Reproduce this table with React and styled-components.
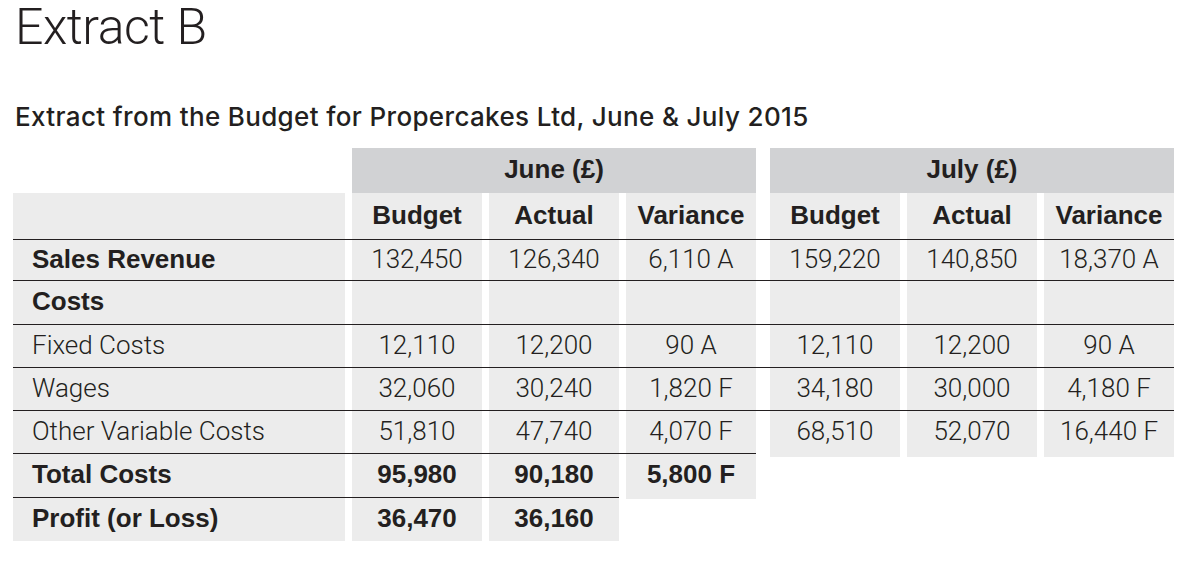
import React from "react";
import styled, { createGlobalStyle } from "styled-components";

const Global = createGlobalStyle`
  html, body { margin: 0; padding: 0; background: #ffffff; }
  body { color: #231f20; font-family: "Liberation Sans", Arial, sans-serif; }
`;

const INK = "#231f20";
const CELL = "#ececec";
const HEAD = "#d1d2d4";

const Page = styled.div`
  padding: 0 0 0 13px;
  display: flex;
  flex-direction: column;
  align-items: flex-start;
`;

const Title = styled.h1`
  margin: 0 0 0 2px;
  font-family: Roboto, "Liberation Sans", sans-serif;
  font-weight: 300;
  font-size: 50px;
  line-height: 54px;
  letter-spacing: -0.5px;
  color: ${INK};
`;

const Subtitle = styled.h2`
  margin: 50px 0 18px 2px;
  font-family: Inter, "Liberation Sans", sans-serif;
  font-weight: 500;
  font-size: 26px;
  line-height: 26px;
  letter-spacing: 0.35px;
  color: ${INK};
`;

const Table = styled.div`
  display: flex;
  flex-direction: column;
  align-items: flex-start;
`;

const Row = styled.div`
  display: flex;
  gap: 7px;
  box-sizing: border-box;
  height: ${(p) => p.$h}px;
  border-top: ${(p) => (p.$ruled ? `1px solid ${INK}` : "none")};
`;

const Spacer = styled.div`
  width: 332px;
`;

const GroupHead = styled.div`
  width: 404px;
  margin-left: ${(p) => (p.$split ? 7 : 0)}px;
  background: ${HEAD};
  display: flex;
  align-items: center;
  justify-content: center;
  padding-bottom: 3px;
  box-sizing: border-box;
  font-family: "Liberation Sans", Arial, sans-serif;
  font-weight: 700;
  font-size: 26px;
  color: ${INK};
`;

const Label = styled.div`
  width: 332px;
  box-sizing: border-box;
  padding: 0 0 2px 19px;
  background: ${CELL};
  display: flex;
  align-items: center;
  white-space: nowrap;
  font-family: ${(p) =>
    p.$bold ? `"Liberation Sans", Arial, sans-serif` : `Roboto, "Liberation Sans", sans-serif`};
  font-weight: ${(p) => (p.$bold ? 700 : 300)};
  font-size: 26px;
  color: ${INK};
`;

const Cell = styled.div`
  width: 130px;
  margin-left: ${(p) => (p.$split ? 7 : 0)}px;
  box-sizing: border-box;
  padding-bottom: 2px;
  background: ${CELL};
  box-shadow: ${(p) => (p.$overhang ? `0 ${p.$overhang}px 0 ${CELL}` : "none")};
  display: flex;
  align-items: center;
  justify-content: center;
  white-space: nowrap;
  font-family: ${(p) =>
    p.$bold ? `"Liberation Sans", Arial, sans-serif` : `Roboto, "Liberation Sans", sans-serif`};
  font-weight: ${(p) => (p.$bold ? 700 : 300)};
  font-size: 26px;
  color: ${INK};
`;

const cols = ["Budget", "Actual", "Variance", "Budget", "Actual", "Variance"];

const rows = [
  { label: "Sales Revenue", bold: true, h: 41, values: ["132,450", "126,340", "6,110 A", "159,220", "140,850", "18,370 A"] },
  { label: "Costs", bold: true, h: 44, values: ["", "", "", "", "", ""] },
  { label: "Fixed Costs", h: 43, values: ["12,110", "12,200", "90 A", "12,110", "12,200", "90 A"] },
  { label: "Wages", h: 43, values: ["32,060", "30,240", "1,820 F", "34,180", "30,000", "4,180 F"] },
  { label: "Other Variable Costs", h: 43, values: ["51,810", "47,740", "4,070 F", "68,510", "52,070", "16,440 F"], overhang: [0, 0, 0, 4, 4, 4] },
  { label: "Total Costs", bold: true, boldValues: true, h: 44, values: ["95,980", "90,180", "5,800 F"], overhang: [0, 0, 2] },
  { label: "Profit (or Loss)", bold: true, boldValues: true, h: 44, values: ["36,470", "36,160"] },
];

export default function App() {
  return (
    <>
      <Global />
      <Page>
        <Title>Extract B</Title>
        <Subtitle>Extract from the Budget for Propercakes Ltd, June &amp; July 2015</Subtitle>
        <Table>
          <Row $h={45}>
            <Spacer />
            <GroupHead>June (£)</GroupHead>
            <GroupHead $split>July (£)</GroupHead>
          </Row>
          <Row $h={46}>
            <Label />
            {cols.map((c, i) => (
              <Cell key={i} $bold $split={i === 3}>
                {c}
              </Cell>
            ))}
          </Row>
          {rows.map((r) => (
            <Row key={r.label} $h={r.h} $ruled>
              <Label $bold={r.bold}>{r.label}</Label>
              {r.values.map((v, i) => (
                <Cell
                  key={i}
                  $bold={r.boldValues}
                  $split={i === 3}
                  $overhang={r.overhang ? r.overhang[i] : 0}
                >
                  {v}
                </Cell>
              ))}
            </Row>
          ))}
        </Table>
      </Page>
    </>
  );
}
